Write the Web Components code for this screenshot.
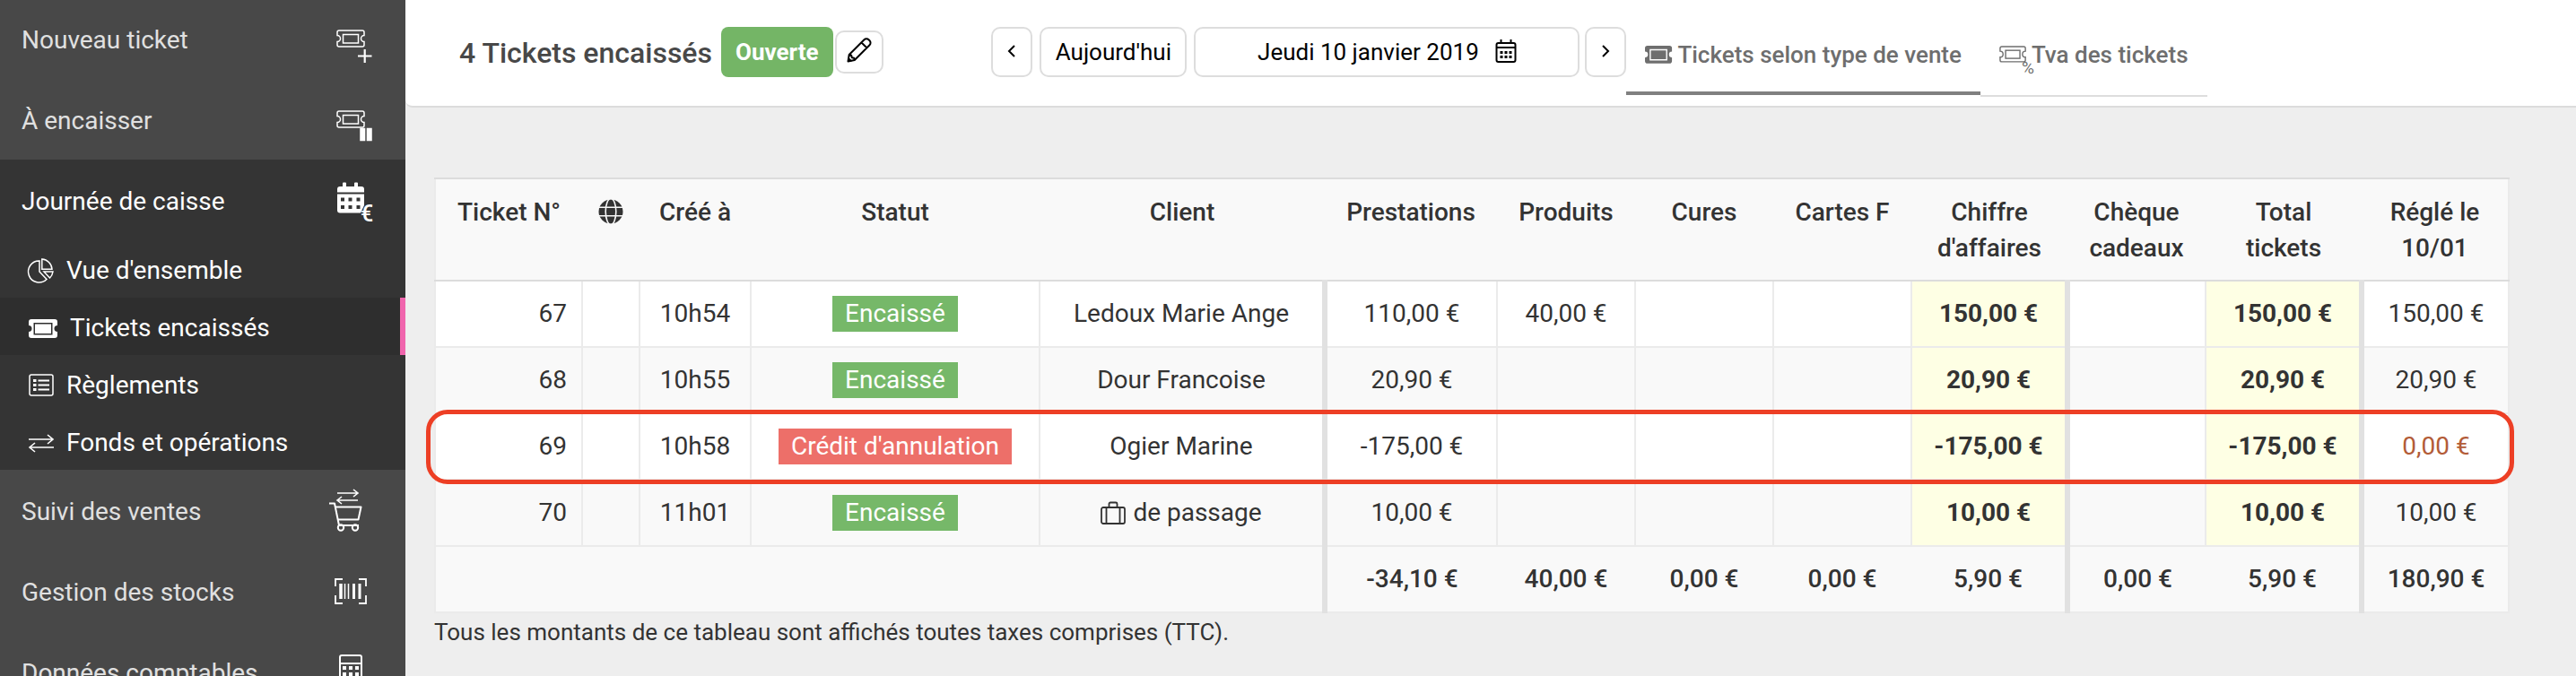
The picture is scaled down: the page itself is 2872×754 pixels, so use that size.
<!DOCTYPE html>
<html lang="fr">
<head>
<meta charset="utf-8">
<title>Tickets encaissés</title>
<style>
  body { margin: 0; font-family: Roboto, "Liberation Sans", sans-serif; font-size: 28px; line-height: 40px; color: #333; background: #eee; }
</style>
</head>
<body>
<app-shell>
  <side-nav slot="nav">
    <nav-entry icon="ticket-plus">Nouveau ticket</nav-entry>
    <nav-entry icon="ticket-pause">À encaisser</nav-entry>
    <nav-group>
      <nav-entry icon="calendar-euro" open>Journée de caisse</nav-entry>
      <nav-sub icon="pie">Vue d'ensemble</nav-sub>
      <nav-sub icon="ticket-solid" active>Tickets encaissés</nav-sub>
      <nav-sub icon="list">Règlements</nav-sub>
      <nav-sub icon="exchange">Fonds et opérations</nav-sub>
    </nav-group>
    <nav-entry icon="cart">Suivi des ventes</nav-entry>
    <nav-entry icon="barcode">Gestion des stocks</nav-entry>
    <nav-entry icon="calculator">Données comptables</nav-entry>
  </side-nav>
  <top-bar slot="header"></top-bar>
  <tickets-table></tickets-table>
</app-shell>

<script>
const TICKET = 'M3 1H29a2 2 0 0 1 2 2V6.500a3.500 3.500 0 0 0 0 7V17a2 2 0 0 1-2 2H3a2 2 0 0 1-2-2V13.500a3.500 3.500 0 0 0 0-7V3a2 2 0 0 1 2-2z';
const outlineTicket = `<path d="${TICKET}" stroke-width="1.500"/><rect x="7.500" y="5.500" width="17" height="9.500" stroke-width="1.500"/>`;
const solidTicket = `<path d="M3 0H29a3 3 0 0 1 3 3V7a3 3 0 0 0 0 7V18a3 3 0 0 1-3 3H3a3 3 0 0 1-3-3V14a3 3 0 0 0 0-7V3a3 3 0 0 1 3-3zM5.500 4V17.500H26.500V4zM7 5.500H25V16H7z" fill="currentColor" fill-rule="evenodd" stroke="none"/>`;
const arrows = '<path d="M0 6H27M21 1l6 5-6 5M28 15H1M7 10l-6 5 6 5" stroke-width="1.600"/>';

/* name: [width, height, markup] */
const ICONS = {
  'ticket-plus': [52, 56, `<g transform="translate(9 18)">${outlineTicket}</g><path d="M33 47.500H48.500M40.700 40V55" stroke-width="2.200"/>`],
  'ticket-pause': [52, 56, `<g transform="translate(9 18)">${outlineTicket}</g><path d="M36 38.500h4.500v13H36zM43.500 38.500H48v13h-4.500z" fill="currentColor" stroke-width="1.500"/>`],
  'calendar-euro': [52, 56, `<g fill="currentColor" stroke="none"><path d="M10 19.500V16a3 3 0 0 1 3-3h3V9.500a1 1 0 0 1 1-1h2a1 1 0 0 1 1 1V13h9V9.500a1 1 0 0 1 1-1h2a1 1 0 0 1 1 1V13h4a3 3 0 0 1 3 3v3.500z"/><path fill-rule="evenodd" d="M10 21.500H40V34l-4 8.500H13a3 3 0 0 1-3-3zM14 25.500v4h4v-4zM22.500 25.500v4h4v-4zM31.500 25.500v4h4v-4zM14 34v4h4v-4zM22.500 34v4h4v-4zM31.500 34v4h4v-4z"/><text x="36" y="52" font-size="25" font-weight="500">€</text></g>`],
  'cart': [52, 56, `<g transform="translate(9 4)"><path d="M1 5H24M19 1l5 4-5 4M24 13H1M6 9l-5 4 5 4" stroke-width="1.600"/></g><path d="M1 20.500H7L12 45H34M8.500 24.500H36.500L33.500 38.500H11" stroke-width="2" stroke-linejoin="round"/><circle cx="14" cy="47.500" r="3.200" stroke-width="2"/><circle cx="30" cy="47.500" r="3.200" stroke-width="2"/>`],
  'barcode': [52, 56, `<path d="M8 23V15H16M34 15h8V23M42 33v9H34M16 42H8V33" stroke-width="1.800"/><path d="M14 20V37" stroke-width="3.500"/><path d="M18.500 20V37M22.500 20V37" stroke-width="1.500"/><path d="M28.500 20V37" stroke-width="3"/><path d="M35 20V37" stroke-width="3"/>`],
  'calculator': [52, 56, `<rect x="13" y="10" width="24" height="34" rx="2" stroke-width="2"/><path d="M13 19H37" stroke-width="2"/><path d="M16 24h4M23 24h4M30 24h4M16 31h4M23 31h4M30 31h4M16 38h4M23 38h4M30 38h4" stroke-width="4"/>`],
  'pie': [28, 28, `<path d="M12 3A12 12 0 1 0 20 23.500L12 15z" stroke-width="1.500"/><path d="M14.800 1A12 12 0 0 1 26 12.200H14.800z" stroke-width="1.500"/><path d="M17 15H27A12 12 0 0 1 23.500 22z" stroke-width="1.500"/>`],
  'ticket-solid': [32, 21, solidTicket],
  'list': [28, 26, `<rect x="1" y="1" width="26" height="23" rx="2" stroke-width="1.500"/><path d="M10.500 7.500H23M10.500 12.500H23M10.500 17.500H23" stroke-width="1.800"/><path d="M5 7.500H8.500M5 12.500H8.500M5 17.500H8.500" stroke-width="2.800"/>`],
  'exchange': [28, 21, arrows],
  'pencil': [28, 32, `<path d="M1.500 26.500l1.200-7.500L19.500 2.200a3.500 3.500 0 0 1 5 0l1 1a3.500 3.500 0 0 1 0 5L8.800 25z M16.500 5.500l5.800 5.800M2.700 19l2.500.8.600 2.400 2.400.500.600 2.300" stroke-width="2" stroke-linejoin="round"/><path d="M1.500 26.500l.6-4 3.400 3.300z" fill="currentColor"/>`],
  'calendar': [24, 30, `<rect x="1.500" y="5" width="21" height="21" rx="2" stroke-width="2"/><path d="M1.500 10H22.500M6.500 1V5M17.500 1V5" stroke-width="2"/><path d="M5.500 15.500h3M10.500 15.500h3M15.500 15.500h3M5.500 20.500h3M10.500 20.500h3M15.500 20.500h3" stroke-width="3"/>`],
  'chev-left': [10, 18, '<path d="M8 2L2 8l6 6" stroke-width="2"/>'],
  'chev-right': [10, 18, '<path d="M2 2l6 6-6 6" stroke-width="2"/>'],
  'tab-solid': [30, 20, `<g transform="scale(.94)">${solidTicket}</g>`],
  'tab-percent': [30, 20, `<g transform="scale(.94)">${outlineTicket}</g><text x="25" y="31" font-size="19" font-weight="400" fill="currentColor" stroke="none">%</text>`],
  'luggage': [28, 26, `<rect x="1" y="7" width="26" height="18" rx="2" stroke-width="1.800"/><path d="M6.500 7V25M21.500 7V25M9.500 7V3a1.500 1.500 0 0 1 1.500-1.500h6A1.500 1.500 0 0 1 18.500 3V7" stroke-width="1.800"/>`],
  'globe': [28, 28, `<circle cx="14" cy="14" r="13.500" fill="currentColor" stroke="none"/><path d="M0 9.300H28M0 18.700H28" stroke="#f9f9f9" stroke-width="1.600"/><ellipse cx="14" cy="14" rx="5.800" ry="14.500" stroke="#f9f9f9" stroke-width="1.600"/>`]
};

function define(name, html, setup) {
  const template = document.createElement('template');
  template.innerHTML = html;
  customElements.define(name, class extends HTMLElement {
    constructor() {
      super();
      this.attachShadow({ mode: 'open' }).append(template.content.cloneNode(true));
    }
    connectedCallback() { if (setup) setup(this, this.shadowRoot); }
  });
}
const passIcon = (el, root) => root.querySelector('ui-icon').setAttribute('name', el.getAttribute('icon'));

customElements.define('ui-icon', class extends HTMLElement {
  static observedAttributes = ['name'];
  constructor() { super(); this.attachShadow({ mode: 'open' }); }
  attributeChangedCallback() {
    const [w, h, body] = ICONS[this.getAttribute('name')];
    this.shadowRoot.innerHTML = `<style>:host{display:inline-flex;flex:none}svg{display:block;overflow:visible}</style>
      <svg width="${w}" height="${h}" viewBox="0 0 ${w} ${h}" fill="none" stroke="currentColor" aria-hidden="true">${body}</svg>`;
  }
});

define('app-shell', `<style>
  :host { display: grid; grid-template-columns: 452px minmax(0, 1fr); height: 100vh; overflow: hidden; }
  .side { background: #484848; overflow: hidden; }
  main { padding: 78px 74px 0 32px; }
</style>
<div class="side"><slot name="nav"></slot></div>
<div><slot name="header"></slot><main><slot></slot></main></div>`);

define('side-nav', `<style>:host { display: block; } nav { margin-top: -2px; }</style><nav aria-label="Menu"><slot></slot></nav>`);

define('nav-group', `<style>:host { display: block; background: #343434; }</style><slot></slot>`);

define('nav-entry', `<style>
  :host { display: block; color: #e0e0e0; }
  :host([open]) { color: #fff; }
  a { display: flex; align-items: center; justify-content: space-between; height: 90px; padding: 0 34px 0 24px; color: inherit; text-decoration: none; }
  span { padding-top: 4px; }
  ui-icon { color: #fff; }
</style><a href="#"><span><slot></slot></span><ui-icon></ui-icon></a>`, passIcon);

define('nav-sub', `<style>
  :host { display: block; color: #fff; }
  a { display: flex; align-items: center; gap: 14px; height: 64px; padding: 4px 32px 0; box-sizing: border-box; color: inherit; text-decoration: none; }
  :host([active]) a { background: #2e2e2e; border-right: 6px solid #f065ad; }
</style><a href="#"><ui-icon></ui-icon><span><slot></slot></span></a>`, passIcon);

define('top-bar', `<style>
  :host { display: block; font-size: 26px; }
  header { display: flex; align-items: flex-start; height: 88px; padding-top: 30px; background: #fff; border-bottom: 2px solid #dcdcdc; border-bottom-left-radius: 8px; }
  .title { flex: 0 0 27%; box-sizing: border-box; display: flex; align-items: center; padding-left: 60px; white-space: nowrap; }
  h1 { margin: 0 10px 0 0; padding-top: 2px; font-size: 32px; font-weight: 500; color: #484848; }
  .state { background: #74b566; color: #fff; font-weight: 700; line-height: 56px; padding: 0 16px; border-radius: 8px; margin-right: 2px; }
  button { display: flex; align-items: center; justify-content: center; box-sizing: border-box; height: 56px; margin: 0; padding: 0; font: inherit; color: #000; background: #fff; border: 2px solid #ddd; border-radius: 10px; }
  .edit { width: 54px; height: 48px; }
  .dates { display: flex; flex: none; }
  .step { width: 46px; }
  .today { width: 164px; margin: 0 8px; }
  .date { width: 430px; gap: 18px; margin-right: 6px; }
  .tabs { display: flex; align-items: flex-start; white-space: nowrap; color: #6e6e6e; font-weight: 500; }
  a { display: flex; align-items: center; gap: 6px; padding: 11px 21px 25px; color: inherit; text-decoration: none; border-bottom: 2px solid #ddd; }
  a.on { padding-bottom: 21px; border-bottom: 4px solid #808080; }
</style>
<header>
  <div class="title"><h1>4 Tickets encaissés</h1><span class="state">Ouverte</span><button class="edit" aria-label="Modifier"><ui-icon name="pencil"></ui-icon></button></div>
  <div class="dates">
    <button class="step" aria-label="Jour précédent"><ui-icon name="chev-left"></ui-icon></button>
    <button class="today">Aujourd'hui</button>
    <button class="date">Jeudi 10 janvier 2019<ui-icon name="calendar"></ui-icon></button>
    <button class="step" aria-label="Jour suivant"><ui-icon name="chev-right"></ui-icon></button>
  </div>
  <nav class="tabs" aria-label="Vues">
    <a class="on" href="#"><ui-icon name="tab-solid"></ui-icon>Tickets selon type de vente</a>
    <a href="#"><ui-icon name="tab-percent"></ui-icon>Tva des tickets</a>
  </nav>
</header>`);

define('status-badge', `<style>
  :host { display: inline-block; padding: 0 14px; background: #76b869; color: #fff; vertical-align: top; }
  :host([kind="credit"]) { background: #ed6f69; }
</style><slot></slot>`);

define('tickets-table', `<style>
  :host { display: block; }
  table { width: 100%; table-layout: fixed; border-collapse: collapse; border: 2px solid #ebebeb; background: #fff; text-align: center; }
  th, td { padding: 16px 0; height: 40px; border: 0 solid #ebebeb; vertical-align: top; font-weight: 400; }
  thead th { height: 80px; padding: 17px 0 15px; font-weight: 500; background: #f9f9f9; border-top: 2px solid #dcdcdc; border-bottom: 2px solid #dcdcdc; }
  thead ui-icon { vertical-align: top; padding-top: 5px; }
  tbody td { border-width: 2px; }
  tbody tr:nth-child(even), tfoot tr { background: #f9f9f9; }
  tbody td:first-child { text-align: right; padding-right: 16px; }
  tbody td:nth-child(10), tbody td:nth-child(12) { background: #feffe4; font-weight: 700; }
  tbody td:nth-child(5), tbody td:nth-child(10), tbody td:nth-child(12),
  tfoot td:nth-child(1), tfoot td:nth-child(6), tfoot td:nth-child(8) { border-right: 6px solid #e1e1e1; }
  tfoot td { font-weight: 500; }
  .client { display: inline-flex; align-items: center; gap: 8px; vertical-align: top; }
  .zero { color: #b35c38; }
  tr.marked { position: relative; }
  .ring { position: absolute; inset: -4px -6px -5px -10px; border: 5px solid #ed3f25; border-radius: 24px; pointer-events: none; }
  p { margin: 0; padding-top: 1px; font-size: 26px; }
</style>
<table>
  <colgroup></colgroup>
  <thead><tr>
    <th>Ticket N°</th><th aria-label="En ligne"><ui-icon name="globe"></ui-icon></th><th>Créé à</th><th>Statut</th><th>Client</th>
    <th>Prestations</th><th>Produits</th><th>Cures</th><th>Cartes F</th><th>Chiffre<br>d'affaires</th><th>Chèque<br>cadeaux</th><th>Total<br>tickets</th><th>Réglé le<br>10/01</th>
  </tr></thead>
  <tbody></tbody>
  <tfoot><tr><td colspan="5"></td><td>-34,10 €</td><td>40,00 €</td><td>0,00 €</td><td>0,00 €</td><td>5,90 €</td><td>0,00 €</td><td>5,90 €</td><td>180,90 €</td></tr></tfoot>
</table>
<p>Tous les montants de ce tableau sont affichés toutes taxes comprises (TTC).</p>`, (el, root) => {
  const widths = [164, 64, 124, 322, 318, 192, 154, 154, 154, 174, 154, 174, 164];
  root.querySelector('colgroup').innerHTML = widths.map(w => `<col style="width:${w}px">`).join('');
  const paid = '<status-badge>Encaissé</status-badge>';
  const rows = [
    ['67', '', '10h54', paid, 'Ledoux Marie Ange', '110,00 €', '40,00 €', '', '', '150,00 €', '', '150,00 €', '150,00 €'],
    ['68', '', '10h55', paid, 'Dour Francoise', '20,90 €', '', '', '', '20,90 €', '', '20,90 €', '20,90 €'],
    ['69<span class="ring"></span>', '', '10h58', '<status-badge kind="credit">Crédit d\'annulation</status-badge>', 'Ogier Marine', '-175,00 €', '', '', '', '-175,00 €', '', '-175,00 €', '<span class="zero">0,00 €</span>'],
    ['70', '', '11h01', paid, '<span class="client"><ui-icon name="luggage"></ui-icon>de passage</span>', '10,00 €', '', '', '', '10,00 €', '', '10,00 €', '10,00 €']
  ];
  root.querySelector('tbody').innerHTML = rows.map((r, i) =>
    `<tr${i === 2 ? ' class="marked"' : ''}>${r.map(c => `<td>${c}</td>`).join('')}</tr>`).join('');
});
</script>
</body>
</html>
